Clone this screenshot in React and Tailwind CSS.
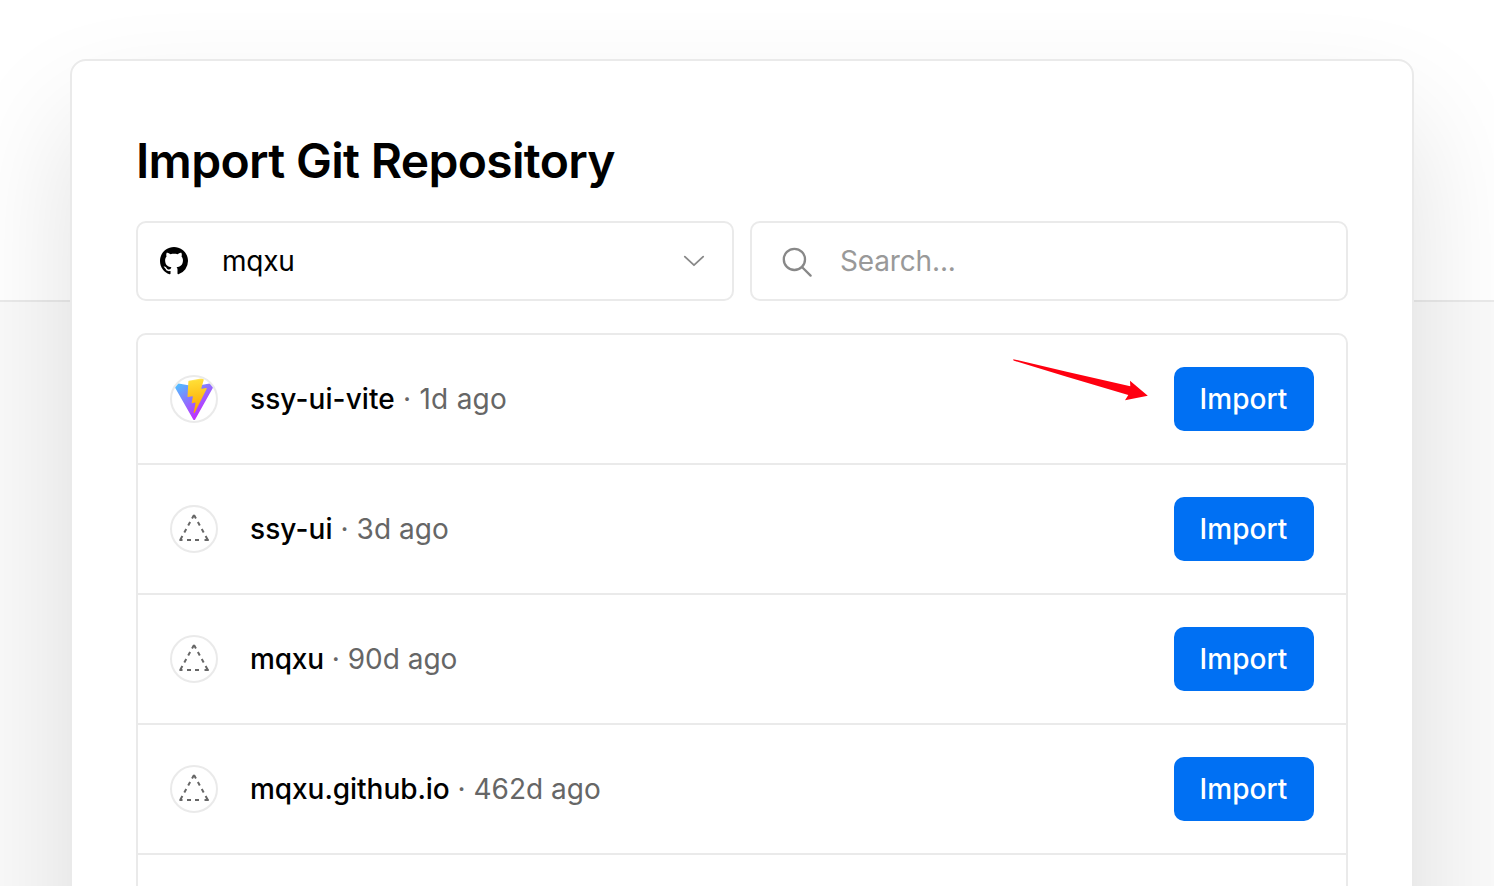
const FONT = "font-['Inter','Liberation_Sans',sans-serif]";

const repos = [
  { name: "ssy-ui-vite", age: "1d ago", vite: true, nameTracking: "tracking-[0.1px]", ageTracking: "tracking-[0.25px]" },
  { name: "ssy-ui", age: "3d ago", nameTracking: "tracking-[0.1px]", ageTracking: "tracking-[0.05px]" },
  { name: "mqxu", age: "90d ago", nameTracking: "tracking-[-0.2px]", ageTracking: "tracking-normal" },
  { name: "mqxu.github.io", age: "462d ago", nameTracking: "tracking-[-0.06px]", ageTracking: "tracking-normal" },
  { name: "" },
];

function GithubIcon() {
  return (
    <svg viewBox="0 0 16 16" className="size-7 shrink-0" fill="#000">
      <path
        fillRule="evenodd"
        d="M8 0C3.58 0 0 3.58 0 8c0 3.54 2.29 6.53 5.47 7.59.4.07.55-.17.55-.38 0-.19-.01-.82-.01-1.49-2.01.37-2.53-.49-2.69-.94-.09-.23-.48-.94-.82-1.13-.28-.15-.68-.52-.01-.53.63-.01 1.08.58 1.23.82.72 1.21 1.87.87 2.33.66.07-.52.28-.87.51-1.07-1.78-.2-3.64-.89-3.64-3.95 0-.87.31-1.59.82-2.15-.08-.2-.36-1.02.08-2.12 0 0 .67-.21 2.2.82.64-.18 1.32-.27 2-.27s1.36.09 2 .27c1.53-1.04 2.2-.82 2.2-.82.44 1.1.16 1.92.08 2.12.51.56.82 1.27.82 2.15 0 3.07-1.87 3.75-3.65 3.95.29.25.54.73.54 1.48 0 1.07-.01 1.93-.01 2.2 0 .21.15.46.55.38A8.01 8.01 0 0 0 16 8c0-4.42-3.58-8-8-8z"
      />
    </svg>
  );
}

function ViteLogo() {
  return (
    <svg viewBox="0 0 410 404" className="size-11 shrink-0 translate-y-[0.5px]">
      <defs>
        <linearGradient id="v" x1="6" y1="33" x2="235" y2="344" gradientUnits="userSpaceOnUse">
          <stop stopColor="#41D1FF" />
          <stop offset="1" stopColor="#BD34FE" />
        </linearGradient>
        <linearGradient id="b" x1="194.65" y1="8.82" x2="236.08" y2="292.99" gradientUnits="userSpaceOnUse">
          <stop stopColor="#FFEA83" />
          <stop offset="0.0833" stopColor="#FFDD35" />
          <stop offset="1" stopColor="#FFA800" />
        </linearGradient>
      </defs>
      <path
        fill="url(#v)"
        d="M399.641 59.5246L215.643 388.545C211.844 395.338 202.084 395.378 198.228 388.618L10.5817 59.5563C6.38087 52.1896 12.6802 43.2665 21.0281 44.7586L205.223 77.6824C206.398 77.8924 207.601 77.8904 208.776 77.6763L389.119 44.8058C397.439 43.2894 403.768 52.1434 399.641 59.5246Z"
      />
      <path
        fill="url(#b)"
        d="M292.965 1.5744L156.801 28.2552C154.563 28.6937 152.906 30.5903 152.771 32.8664L144.395 174.33C144.198 177.662 147.258 180.248 150.51 179.498L188.42 170.749C191.967 169.931 195.172 173.055 194.443 176.622L183.18 231.775C182.422 235.487 185.907 238.661 189.532 237.56L212.947 230.446C216.577 229.344 220.065 232.527 219.297 236.242L201.398 322.875C200.278 328.294 207.486 331.249 210.492 326.603L212.5 323.5L323.454 102.072C325.312 98.3645 322.108 94.137 318.036 94.9228L279.014 102.454C275.347 103.161 272.227 99.746 273.262 96.1583L298.731 7.86689C299.767 4.27314 296.636 0.855181 292.965 1.5744Z"
      />
    </svg>
  );
}

function TriangleIcon() {
  return (
    <svg viewBox="0 0 44 44" className="size-11 shrink-0" fill="none" stroke="#666" strokeWidth="2">
      <path d="M22 8L7.9 33.5" strokeDasharray="4 4" />
      <path d="M22 8L36.1 33.5" strokeDasharray="4 4" />
      <path d="M7.4 33H10.5M15 33H19M23 33H27M32.5 33H36.8" />
    </svg>
  );
}

function RepoRow({ repo }) {
  return (
    <li className="flex h-[130px] shrink-0 items-center border-b-2 border-[#eaeaea] px-8">
      {repo.name && (
        <>
          <span className="flex size-12 items-center justify-center overflow-hidden rounded-full border-2 border-[#eaeaea]">
            {repo.vite ? <ViteLogo /> : <TriangleIcon />}
          </span>
          <p className={`ml-8 flex-1 text-[28px] leading-10 whitespace-pre text-[#666] ${repo.ageTracking}`}>
            <span className={`font-medium text-black ${repo.nameTracking}`}>{repo.name}</span>
            {" · "}
            {repo.age}
          </p>
          <button className="h-16 w-[140px] rounded-[10px] bg-[#0070f3] pr-px text-[28px] font-medium tracking-[0.05px] text-white">
            Import
          </button>
        </>
      )}
    </li>
  );
}

export default function App() {
  return (
    <div className={`relative h-[886px] w-full overflow-hidden bg-[linear-gradient(#fff_300px,#eaeaea_300px,#eaeaea_302px,#fafafa_302px)] pt-[59px] pl-[70px] ${FONT}`}>
      <main className="h-[1200px] w-[1344px] rounded-2xl border-2 border-[#eaeaea] bg-white px-16 pt-[68px] shadow-[0_60px_120px_rgba(0,0,0,0.12)]">
        <h1 className="h-[64px] text-[48px] leading-[64px] font-semibold tracking-[-0.68px] whitespace-nowrap text-black">
          Import Git Repository
        </h1>
        <div className="mt-[28px] flex gap-4">
          <div className="flex h-20 w-[598px] items-center rounded-[10px] border-2 border-[#eaeaea] pr-[26px] pl-[22px]">
            <GithubIcon />
            <span className="ml-[34px] flex-1 text-[28px] tracking-[-0.2px] text-black">mqxu</span>
            <svg viewBox="0 0 24 14" className="h-[14px] w-6" fill="none" stroke="#888" strokeWidth="1.8" strokeLinecap="round" strokeLinejoin="round">
              <path d="M2.8 2.6L12 11.2L21.2 2.6" />
            </svg>
          </div>
          <div className="flex h-20 w-[598px] items-center rounded-[10px] border-2 border-[#eaeaea] pl-7">
            <svg viewBox="0 0 32 32" className="size-8" fill="none" stroke="#888" strokeWidth="2.3" strokeLinecap="round">
              <circle cx="14.4" cy="14.4" r="10.6" />
              <path d="M22.2 22.2L30.6 30.6" />
            </svg>
            <span className="ml-7 text-[28px] tracking-[-0.15px] text-[#999]">Search...</span>
          </div>
        </div>
        <ul className="mt-8 rounded-[10px] border-2 border-[#eaeaea]">
          {repos.map((repo, i) => (
            <RepoRow key={i} repo={repo} />
          ))}
        </ul>
      </main>
      <svg viewBox="0 0 136 44" className="absolute top-[358px] left-[1012px] h-11 w-[136px]" fill="#ff0010">
        <path d="M1.2 1.2L54.7 13.7L118.3 28.3L118 22.7L135.8 37.7L113 42.2L116.3 36.9L54.7 18.8L1.5 2.6Z" />
      </svg>
    </div>
  );
}
